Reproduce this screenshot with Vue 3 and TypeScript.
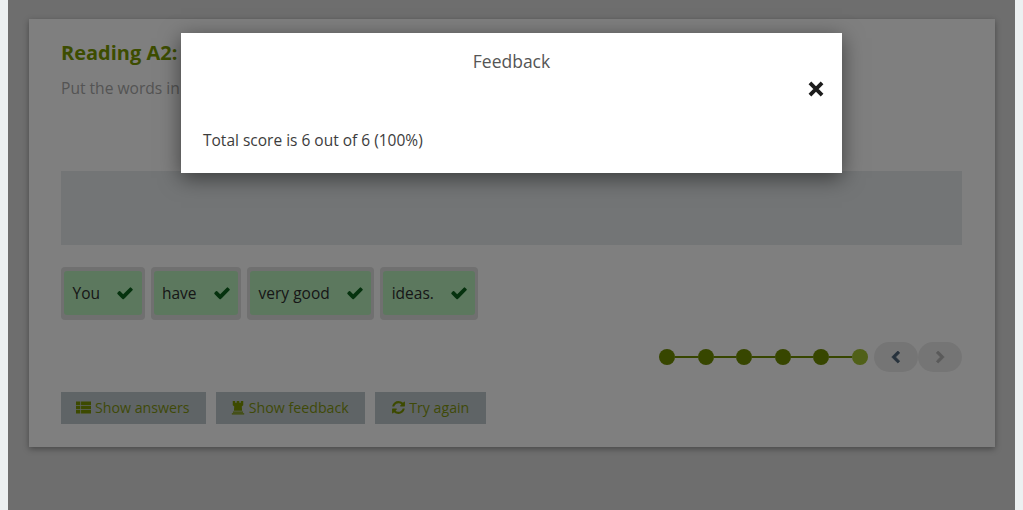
<template>
  <div class="page">
    <div class="content">
      <div class="card">
        <h1 class="title">Reading A2:</h1>
        <p class="intro">Put the words in</p>

        <div class="dropzone"></div>

        <div class="chips">
          <div v-for="word in words" :key="word" class="chip-wrap">
            <div class="chip">
              <span>{{ word }}</span>
              <svg class="check" viewBox="0 0 1792 1792"><path :d="icons.check" /></svg>
            </div>
          </div>
        </div>

        <div class="progress">
          <div class="dots">
            <template v-for="n in 6" :key="n">
              <span class="dot" :class="{ current: n === 6 }"></span>
              <span v-if="n < 6" class="link"></span>
            </template>
          </div>
          <div class="nav">
            <button class="nav-btn prev">
              <svg class="chevron" viewBox="0 0 1792 1792"><path :d="icons.left" /></svg>
            </button>
            <button class="nav-btn next">
              <svg class="chevron" viewBox="0 0 1792 1792"><path :d="icons.right" /></svg>
            </button>
          </div>
        </div>

        <div class="actions">
          <button class="action answers">
            <svg class="action-icon" viewBox="0 0 16 16">
              <path d="M0 1.6h4.6v3.8H0zM5.4 1.6H16v3.8H5.4zM0 6.1h4.6v3.8H0zM5.4 6.1H16v3.8H5.4zM0 10.6h4.6v3.8H0zM5.4 10.6H16v3.8H5.4z" />
            </svg>
            Show answers
          </button>
          <button class="action feedback">
            <svg class="action-icon rook" viewBox="0 0 14 16">
              <path d="M1.4 1h2.6v1.8h1.6V1h2.8v1.8H10V1h2.6v4.6l-1.6 1.2.4 4.6H2.6L3 6.8 1.4 5.6zM1.6 12.2h10.8v1.4H1.6zM.4 14.2h13.2v1.3H.4z" />
            </svg>
            Show feedback
          </button>
          <button class="action retry">
            <svg class="action-icon" viewBox="0 0 1792 1792"><path :d="icons.refresh" /></svg>
            Try again
          </button>
        </div>
      </div>

      <div class="overlay"></div>
      <div class="modal">
        <div class="modal-title">Feedback</div>
        <svg class="close" viewBox="0 0 16 16"><path d="M2.6 2.6l10.8 10.8M13.4 2.6L2.6 13.4" /></svg>
        <p class="score">Total score is 6 out of 6 (100%)</p>
      </div>
    </div>
  </div>
</template>

<script setup lang="ts">
const words: string[] = ['You', 'have', 'very good', 'ideas.'];

const icons = {
  check:
    'M1671 566q0 40-28 68l-724 724-136 136q-28 28-68 28t-68-28l-136-136-362-362q-28-28-28-68t28-68l136-136q28-28 68-28t68 28l294 295 656-657q28-28 68-28t68 28l136 136q28 28 28 68z',
  left:
    'M1427 301l-531 531 531 531q19 19 19 45t-19 45l-166 166q-19 19-45 19t-45-19l-742-742q-19-19-19-45t19-45l742-742q19-19 45-19t45 19l166 166q19 19 19 45t-19 45z',
  right:
    'M1363 877l-742 742q-19 19-45 19t-45-19l-166-166q-19-19-19-45t19-45l531-531-531-531q-19-19-19-45t19-45l166-166q19-19 45-19t45 19l742 742q19 19 19 45t-19 45z',
  refresh:
    'M1639 1056q0 5-1 7-64 268-268 434.5t-478 166.5q-146 0-282.5-55t-243.5-157l-129 129q-19 19-45 19t-45-19-19-45v-448q0-26 19-45t45-19h448q26 0 45 19t19 45-19 45l-137 137q71 66 161 102t187 36q134 0 250-65t186-179q11-17 53-117 8-23 30-23h192q13 0 22.5 9.5t9.5 22.5zm25-800v448q0 26-19 45t-45 19h-448q-26 0-45-19t-19-45 19-45l138-138q-148-137-349-137-134 0-250 65t-186 179q-11 17-53 117-8 23-30 23h-199q-13 0-22.5-9.5t-9.5-22.5v-7q65-268 270-434.5t480-166.5q146 0 284 55.5t245 156.5l130-129q19-19 45-19t45 19 19 45z'
};
</script>

<style>
html,
body {
  margin: 0;
  height: 100%;
  overflow: hidden;
  background: #ecf0f1;
}
</style>

<style scoped>
.page {
  height: 510px;
  padding: 0 8px;
  font-family: "Open Sans", "Liberation Sans", sans-serif;
}

.content {
  position: relative;
  height: 510px;
  padding: 19px 20px 0 21px;
  box-sizing: border-box;
  background: #dcdcdc;
  overflow: hidden;
}

.card {
  height: 428px;
  padding: 20px 33px 0 32px;
  box-sizing: border-box;
  background: #ffffff;
  box-shadow: 0 2px 6px rgba(0, 0, 0, 0.35);
}

.title {
  margin: 0;
  font-size: 20px;
  line-height: 28px;
  font-weight: 700;
  color: #7a9a00;
}

.intro {
  margin: 11px 0 0;
  font-size: 15.6px;
  line-height: 20px;
  color: #a8a8a8;
}

.dropzone {
  height: 74px;
  margin-top: 73px;
  background: #e6eaed;
}

.chips {
  display: flex;
  gap: 6px;
  margin-top: 22px;
}

.chip-wrap {
  padding: 4px 3px 5px;
  background: #e0e0e0;
  border-radius: 4px;
}

.chip {
  display: flex;
  align-items: center;
  height: 44px;
  padding: 0 7.5px 0 8.5px;
  gap: 16px;
  font-size: 15.5px;
  color: #2e2e2e;
  background: #b8f0bc;
  border-radius: 3px;
}

.check {
  width: 18px;
  height: 18px;
  fill: #0a641c;
}

.progress {
  display: flex;
  align-items: center;
  justify-content: flex-end;
  margin-top: 22px;
}

.dots {
  display: flex;
  align-items: center;
  margin-right: 6px;
}

.dot {
  width: 16px;
  height: 16px;
  border-radius: 50%;
  background: #6f8c00;
}

.dot.current {
  background: #a0c030;
}

.link {
  width: 22.6px;
  height: 2px;
  background: #6f8c00;
}

.nav {
  display: flex;
}

.nav-btn {
  display: flex;
  align-items: center;
  justify-content: center;
  width: 44px;
  height: 30px;
  padding: 0;
  border: none;
  border-radius: 15px;
  background: #ebebeb;
}

.prev {
  padding-right: 2px;
}

.chevron {
  width: 13px;
  height: 13px;
  fill: #4e6478;
  stroke: #4e6478;
  stroke-width: 120;
}

.next .chevron {
  fill: #b4b4b4;
  stroke: #b4b4b4;
}

.actions {
  display: flex;
  gap: 10px;
  margin-top: 20px;
}

.action {
  display: flex;
  align-items: center;
  justify-content: center;
  gap: 3.5px;
  height: 32px;
  padding: 0 1px 2px 0;
  border: none;
  font-family: inherit;
  font-size: 14.2px;
  color: #7f9410;
  background: #bfc9cd;
}

.answers {
  width: 145px;
}

.feedback {
  width: 149px;
}

.retry {
  width: 111px;
}

.action-icon {
  width: 15px;
  height: 15px;
  fill: #7a9400;
}

.rook {
  width: 14px;
}

.overlay {
  position: absolute;
  inset: 0;
  background: rgba(0, 0, 0, 0.5);
}

.modal {
  position: absolute;
  left: 173px;
  top: 33px;
  width: 661px;
  height: 140px;
  background: #ffffff;
  box-shadow: 0 5px 20px rgba(0, 0, 0, 0.5);
}

.modal-title {
  margin-top: 16px;
  text-align: center;
  font-size: 17.5px;
  line-height: 24px;
  color: #555555;
}

.close {
  position: absolute;
  left: 626px;
  top: 47px;
  width: 18px;
  height: 18px;
  fill: none;
  stroke: #1c1c1c;
  stroke-width: 3.4;
}

.score {
  margin: 0;
  position: absolute;
  left: 22px;
  top: 97px;
  font-size: 15.5px;
  line-height: 20px;
  color: #3c3c3c;
}
</style>
